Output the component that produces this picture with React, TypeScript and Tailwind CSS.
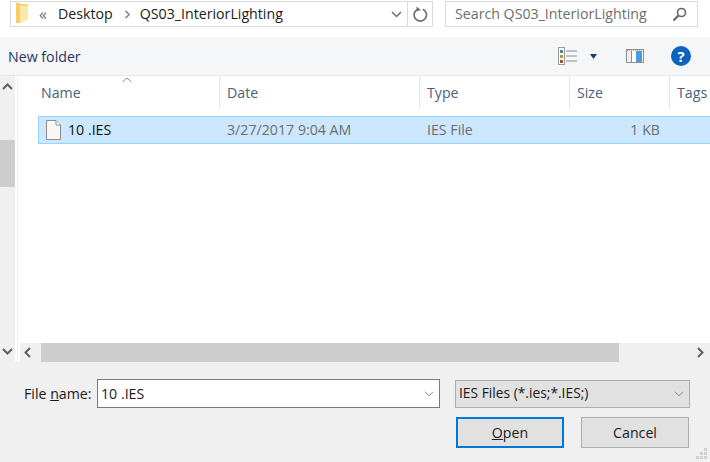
import React from 'react';

const Chevron = ({ dir, className }: { dir: 'up' | 'down' | 'left' | 'right'; className?: string }) => {
  const paths = {
    up: 'M1 7 L5.5 2.5 L10 7',
    down: 'M1 3 L5.5 7.5 L10 3',
    left: 'M7 1 L2.5 5.5 L7 10',
    right: 'M3 1 L7.5 5.5 L3 10',
  };
  return (
    <svg width="11" height="11" viewBox="0 0 11 11" className={className}>
      <path d={paths[dir]} fill="none" stroke="currentColor" strokeWidth="2" />
    </svg>
  );
};

const FolderIcon = () => (
  <svg width="13" height="20" viewBox="0 0 13 20">
    <path d="M0 0 H4 L5 1 H12 V16 L4 20 H0 Z" fill="#f8d775" />
    <path d="M4 3 H12 V16 L4 20 Z" fill="#fce9a8" />
    <path d="M0 0 H4 V20 H0 Z" fill="#f5cf63" />
  </svg>
);

const columns = [
  { label: 'Name', width: 'w-[182px] border-r', pad: 'pl-[3px]' },
  { label: 'Date', width: 'w-[200px] border-r', pad: 'pl-[7px]' },
  { label: 'Type', width: 'w-[150px] border-r', pad: 'pl-[7px]' },
  { label: 'Size', width: 'w-[100px] border-r', pad: 'pl-[7px]' },
  { label: 'Tags', width: 'flex-1 min-w-0', pad: 'pl-[7px]' },
];

export default function App() {
  return (
    <div className="w-[710px] h-[462px] overflow-hidden bg-[#f0f0f0] text-[14.2px] font-['Open_Sans',sans-serif] flex flex-col">
      {/* address + search */}
      <div className="h-[37px] shrink-0 bg-white flex items-start pt-px pl-[10px]">
        <div className="w-[423px] h-[26px] border border-[#d9d9d9] flex items-center text-[#1a1a1a]">
          <div className="ml-[5px] w-[13px] -mt-[2px]">
            <FolderIcon />
          </div>
          <span className="ml-[10px] text-[#6d6d6d] text-[16px] leading-none w-[19px]">«</span>
          <span>Desktop</span>
          <Chevron dir="right" className="ml-[10px] w-[9px] h-[9px] text-[#8a8a8a]" />
          <span className="ml-[8px]">QS03_InteriorLighting</span>
          <div className="ml-auto h-full flex items-center">
            <Chevron dir="down" className="mr-[5px] text-[#6d6d6d] [&>path]:[stroke-width:1.5]" />
            <div className="w-[25px] h-full border-l border-[#d9d9d9] flex items-center justify-center">
              <svg width="15" height="17" viewBox="0 0 15 17">
                <path d="M9.8 3.2 A6.2 6.2 0 1 1 4.4 3.4" fill="none" stroke="#707070" strokeWidth="1.7" />
                <path d="M3.5 0.5 L3.5 5.5 L8 4 Z" fill="#707070" />
              </svg>
            </div>
          </div>
        </div>
        <div className="ml-[12px] w-[253px] h-[26px] border border-[#d9d9d9] flex items-center pl-[9px] pr-[10px] text-[#6d6d6d]">
          <span>Search QS03_InteriorLighting</span>
          <svg width="15" height="15" viewBox="0 0 15 15" className="ml-auto">
            <circle cx="9.5" cy="5.5" r="4" fill="none" stroke="#666" strokeWidth="1.6" />
            <path d="M6.5 8.5 L1.5 13.5" stroke="#666" strokeWidth="2.2" />
          </svg>
        </div>
      </div>

      {/* toolbar */}
      <div className="h-[39px] shrink-0 bg-[#f5f6f7] flex items-center pl-[8px] border-b border-[#e6e6e6]">
        <span className="text-[#1e395b] pt-[1px]">New folder</span>
        <div className="ml-auto flex items-center">
          <svg width="19" height="18" viewBox="0 0 19 18">
            <rect x="0.5" y="0.5" width="6" height="17" fill="#fff" stroke="#999" />
            <rect x="2" y="3" width="3" height="3" fill="#4a7fa8" />
            <rect x="2" y="8" width="3" height="3" fill="#9aa63c" />
            <rect x="2" y="13" width="3" height="3" fill="#b5482b" />
            <path d="M8 4 H19 M8 9 H19 M8 14 H19" stroke="#8c8c8c" />
          </svg>
          <svg width="7" height="5" viewBox="0 0 7 5" className="ml-[13px]">
            <path d="M0 0 H7 L3.5 5 Z" fill="#1e395b" />
          </svg>
          <svg width="18" height="14" viewBox="0 0 18 14" className="ml-[29px]">
            <rect x="0.5" y="0.5" width="17" height="13" fill="#fff" stroke="#8f8f8f" />
            <rect x="1" y="1" width="4" height="12" fill="#f0f0f0" />
            <path d="M5.5 1 V13" stroke="#8f8f8f" />
            <rect x="10" y="2" width="6" height="11" fill="#4a9be0" />
            <path d="M1 1.5 H17" stroke="#b0b0b0" strokeDasharray="1 1" />
          </svg>
          <div className="ml-[27px] mr-[19px] w-[20px] h-[20px] rounded-full bg-[#0a63bd] text-white font-bold text-[15px] leading-[20px] text-center">
            ?
          </div>
        </div>
      </div>

      {/* main */}
      <div className="h-[286px] shrink-0 flex bg-white">
        <div className="w-[15px] shrink-0 bg-[#f0f0f0] flex flex-col items-center">
          <Chevron dir="up" className="mt-[6px] text-[#606060]" />
          <div className="mt-[47px] w-full h-[47px] bg-[#cdcdcd]" />
          <Chevron dir="down" className="mt-auto mb-[5px] text-[#606060]" />
        </div>
        <div className="w-[3px] shrink-0 bg-white border-r border-[#f0f0f0]" />
        <div className="flex-1 min-w-0 flex flex-col">
          <div className="flex-1 min-h-0 pl-[20px]">
            <div className="relative h-[32px] flex text-[#4c607a]">
              <svg width="10" height="6" viewBox="0 0 10 6" className="absolute left-[84px] top-[1px]">
                <path d="M0.5 5 L5 1 L9.5 5" fill="none" stroke="#8a8a8a" />
              </svg>
              {columns.map((c) => (
                <div key={c.label} className={`${c.width} ${c.pad} shrink-0 h-full flex items-center pt-px border-[#e5e5e5]`}>
                  {c.label}
                </div>
              ))}
            </div>
            <div className="mt-[8px] h-[28px] flex items-center border-y border-l border-[#99d1ff] bg-[#cce8ff] text-[#6d6d6d]">
              <div className="w-[181px] shrink-0 flex items-center pl-[7px] text-[#111]">
                <svg width="15" height="20" viewBox="0 0 15 20">
                  <path d="M0.5 0.5 H10 L14.5 5 V19.5 H0.5 Z" fill="#f7f7f7" stroke="#8c8c8c" />
                  <path d="M10 0.5 V5 H14.5" fill="#fff" stroke="#8c8c8c" />
                </svg>
                <span className="ml-[7px]">10 .IES</span>
              </div>
              <span className="w-[200px] shrink-0 pl-[7px]">3/27/2017 9:04 AM</span>
              <span className="w-[150px] shrink-0 pl-[7px]">IES File</span>
              <span className="w-[90px] shrink-0 text-right">1 KB</span>
            </div>
          </div>
          <div className="h-[19px] shrink-0 flex items-center bg-[#f0f0f0] ml-[2px]">
            <Chevron dir="left" className="ml-[3px] text-[#606060]" />
            <div className="ml-[7px] w-[578px] h-full bg-[#cdcdcd]" />
            <Chevron dir="right" className="ml-auto mr-[4px] text-[#606060]" />
          </div>
        </div>
      </div>

      {/* footer */}
      <div className="relative flex-1 min-h-0 pt-[17px] pl-[24px] text-[#1a1a1a]">
        <div className="flex items-center">
          <span className="w-[73px] shrink-0">
            File <span className="underline">n</span>ame:
          </span>
          <div className="w-[343px] h-[29px] border border-[#7a7a7a] bg-white flex items-center pl-[3px] pr-[5px]">
            <span>10 .IES</span>
            <Chevron dir="down" className="ml-auto w-[10px] h-[10px] text-[#7a7a7a] [&>path]:[stroke-width:1]" />
          </div>
          <div className="ml-[15px] w-[235px] h-[28px] border border-[#adadad] bg-[#e1e1e1] flex items-center pl-[3px] pr-[5px]">
            <span className="text-[13.8px]">IES Files (*.ies;*.IES;)</span>
            <Chevron dir="down" className="ml-auto w-[10px] h-[10px] text-[#7a7a7a] [&>path]:[stroke-width:1]" />
          </div>
        </div>
        <div className="mt-[9px] flex justify-end pr-[21px]">
          <button className="w-[108px] h-[31px] border-2 border-[#0078d7] bg-[#e1e1e1]">
            <span className="underline">O</span>pen
          </button>
          <button className="ml-[17px] w-[108px] h-[31px] border border-[#adadad] bg-[#e1e1e1]">Cancel</button>
        </div>
        <svg width="12" height="12" viewBox="0 0 12 12" className="absolute right-[2px] bottom-[2px]">
          <path d="M8 0h3v3H8z M4 4h3v3H4z M8 4h3v3H8z M0 8h3v3H0z M4 8h3v3H4z M8 8h3v3H8z" fill="#d0d0d0" />
        </svg>
      </div>
    </div>
  );
}
